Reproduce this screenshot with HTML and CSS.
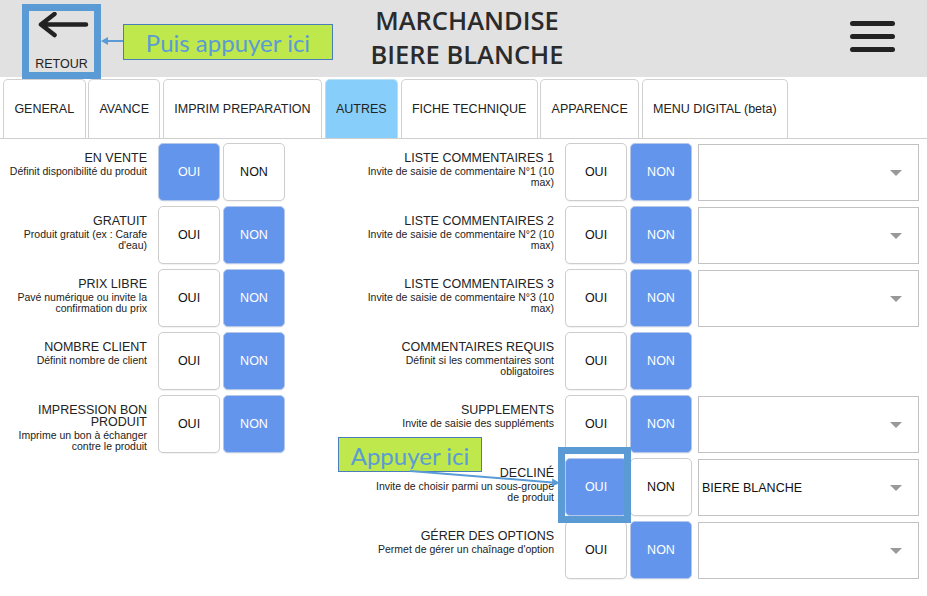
FILE: index.html
```html
<!DOCTYPE html>
<html lang="fr">
<head>
<meta charset="utf-8">
<title>Marchandise - Biere Blanche</title>
<link rel="stylesheet" href="styles.css">
</head>
<body>
<div class="app">
  <header class="topbar">
    <div class="back">
      <svg class="back-icon" width="52" height="26" viewBox="0 0 52 26">
        <path d="M4 12.5H49 M17.5 2 L4 12.5 L17.5 23" fill="none" stroke="#222" stroke-width="4.5" stroke-linecap="round" stroke-linejoin="round"/>
      </svg>
      <span class="back-label">RETOUR</span>
    </div>
    <h1 class="title">MARCHANDISE<br>BIERE BLANCHE</h1>
    <div class="burger"><span></span><span></span><span></span></div>
  </header>

  <nav class="tabs">
    <div class="tab">GENERAL</div>
    <div class="tab">AVANCE</div>
    <div class="tab">IMPRIM PREPARATION</div>
    <div class="tab tab-active">AUTRES</div>
    <div class="tab">FICHE TECHNIQUE</div>
    <div class="tab">APPARENCE</div>
    <div class="tab">MENU DIGITAL (beta)</div>
  </nav>

  <main class="content">
    <section class="group group-left">
      <div class="label"><div class="l-title">EN VENTE</div><div class="l-sub">Définit disponibilité du produit</div></div>
      <div class="btn on">OUI</div><div class="btn">NON</div>

      <div class="label"><div class="l-title">GRATUIT</div><div class="l-sub">Produit gratuit (ex : Carafe d'eau)</div></div>
      <div class="btn">OUI</div><div class="btn on">NON</div>

      <div class="label"><div class="l-title">PRIX LIBRE</div><div class="l-sub">Pavé numérique ou invite la confirmation du prix</div></div>
      <div class="btn">OUI</div><div class="btn on">NON</div>

      <div class="label"><div class="l-title">NOMBRE CLIENT</div><div class="l-sub">Définit nombre de client</div></div>
      <div class="btn">OUI</div><div class="btn on">NON</div>

      <div class="label"><div class="l-title">IMPRESSION BON PRODUIT</div><div class="l-sub">Imprime un bon à échanger contre le produit</div></div>
      <div class="btn">OUI</div><div class="btn on">NON</div>
    </section>

    <section class="group group-right">
      <div class="label"><div class="l-title">LISTE COMMENTAIRES 1</div><div class="l-sub">Invite de saisie de commentaire N°1 (10 max)</div></div>
      <div class="btn">OUI</div><div class="btn on">NON</div>
      <div class="select"><span class="sel-text"></span><span class="caret"></span></div>

      <div class="label"><div class="l-title">LISTE COMMENTAIRES 2</div><div class="l-sub">Invite de saisie de commentaire N°2 (10 max)</div></div>
      <div class="btn">OUI</div><div class="btn on">NON</div>
      <div class="select"><span class="sel-text"></span><span class="caret"></span></div>

      <div class="label"><div class="l-title">LISTE COMMENTAIRES 3</div><div class="l-sub">Invite de saisie de commentaire N°3 (10 max)</div></div>
      <div class="btn">OUI</div><div class="btn on">NON</div>
      <div class="select"><span class="sel-text"></span><span class="caret"></span></div>

      <div class="label"><div class="l-title">COMMENTAIRES REQUIS</div><div class="l-sub">Définit si les commentaires sont obligatoires</div></div>
      <div class="btn">OUI</div><div class="btn on">NON</div>
      <div class="empty"></div>

      <div class="label"><div class="l-title">SUPPLEMENTS</div><div class="l-sub">Invite de saisie des suppléments</div></div>
      <div class="btn">OUI</div><div class="btn on">NON</div>
      <div class="select"><span class="sel-text"></span><span class="caret"></span></div>

      <div class="label"><div class="l-title">DECLINÉ</div><div class="l-sub">Invite de choisir parmi un sous-groupe de produit</div></div>
      <div class="btn on">OUI</div><div class="btn">NON</div>
      <div class="select"><span class="sel-text">BIERE BLANCHE</span><span class="caret"></span></div>

      <div class="label"><div class="l-title">GÉRER DES OPTIONS</div><div class="l-sub">Permet de gérer un chaînage d'option</div></div>
      <div class="btn">OUI</div><div class="btn on">NON</div>
      <div class="select"><span class="sel-text"></span><span class="caret"></span></div>
    </section>
  </main>

  <div class="frame frame-back"></div>
  <div class="note note-top">Puis appuyer ici</div>
  <div class="frame frame-oui"></div>
  <div class="note note-oui">Appuyer ici</div>
  <svg class="arrows" width="927" height="596" viewBox="0 0 927 596">
    <line x1="123" y1="41" x2="106" y2="41" stroke="#5b9bd5" stroke-width="2"/>
    <path d="M101 41 L108 37 L108 45 Z" fill="#5b9bd5"/>
    <line x1="410" y1="471" x2="552" y2="482.4" stroke="#5b9bd5" stroke-width="2"/>
    <path d="M560 483 L551.7 486.4 L552.3 478.4 Z" fill="#5b9bd5"/>
  </svg>
</div>
</body>
</html>
```

FILE: styles.css
```css
* { box-sizing: border-box; }

html, body {
  margin: 0;
  padding: 0;
  background: #ffffff;
}

body {
  font-family: "Liberation Sans", Arial, sans-serif;
  color: #222;
}

.app {
  position: relative;
  width: 927px;
  height: 596px;
  overflow: hidden;
}

/* Header */
.topbar {
  height: 77px;
  background: #e1e1e1;
  display: grid;
  grid-template-columns: 1fr auto 1fr;
  align-items: start;
}

.back {
  justify-self: start;
  margin-left: 29px;
  margin-top: 12px;
  width: 65px;
  display: flex;
  flex-direction: column;
  align-items: center;
}

.back-icon { display: block; margin-left: 3px; }

.back-label {
  margin-top: 19px;
  font-size: 12.5px;
  line-height: 14px;
  color: #222;
}

.title {
  margin: 0;
  padding: 3px 0 0 7px;
  font-family: "Open Sans", "Noto Sans", sans-serif;
  font-weight: 600;
  font-size: 25.5px;
  line-height: 34px;
  color: #2b2b2b;
  text-align: center;
}

.burger {
  justify-self: end;
  margin-right: 32px;
  margin-top: 21px;
  width: 45px;
  display: flex;
  flex-direction: column;
  gap: 8px;
}

.burger span {
  display: block;
  height: 5px;
  border-radius: 3px;
  background: #222;
}

/* Tabs */
.tabs {
  margin-top: 2px;
  height: 60px;
  display: flex;
  align-items: flex-end;
  gap: 2.5px;
  padding-left: 3px;
  border-bottom: 1px solid #cfcfcf;
}

.tab {
  height: 59px;
  padding: 0 10.4px;
  display: flex;
  align-items: center;
  font-size: 12.5px;
  color: #222;
  background: #fff;
  border: 1px solid #d2d2d2;
  border-bottom: none;
  border-radius: 5px 5px 0 0;
}

.tab-active {
  background: #87cefa;
  border-color: #b9dff7;
}

/* Content */
.content {
  display: flex;
  gap: 81px;
  padding-top: 4px;
}

.group {
  display: grid;
  grid-auto-rows: 58px;
  row-gap: 5px;
  column-gap: 3px;
}

.group-left {
  padding-left: 9px;
  grid-template-columns: 146px 62px 62px;
}

.group-right {
  grid-template-columns: 196px 62px 62px 224px;
}

.label {
  padding: 9px 8px 0 0;
  text-align: right;
  color: #222;
}

.l-title {
  font-size: 12.5px;
  line-height: 12px;
}

.l-sub {
  margin-top: 2px;
  font-size: 10.5px;
  line-height: 11px;
  color: #222;
}

.btn {
  display: flex;
  align-items: center;
  justify-content: center;
  font-size: 12.5px;
  color: #111;
  background: #fff;
  border: 1px solid #cdcdcd;
  border-radius: 5px;
  box-shadow: 0 1px 1px rgba(0, 0, 0, 0.06);
}

.btn.on {
  background: #6495ed;
  border-color: #b5c8ea;
  color: #fff;
}

.select {
  margin: 1px 0 0 3px;
  height: 57px;
  display: flex;
  align-items: center;
  justify-content: space-between;
  padding: 0 16px 0 3px;
  background: #fff;
  border: 1px solid #c2c2c2;
}

.sel-text {
  font-size: 12.5px;
  color: #111;
}

.caret {
  width: 0;
  height: 0;
  border-left: 6.5px solid transparent;
  border-right: 6.5px solid transparent;
  border-top: 6px solid #999;
}

/* Annotations (overlays) */
.frame {
  position: absolute;
  border: 7px solid #5b9bd5;
}

.frame-back { left: 22px; top: 4px; width: 79px; height: 75px; }
.frame-oui { left: 558px; top: 447px; width: 73px; height: 76px; }

.note {
  position: absolute;
  display: flex;
  align-items: center;
  justify-content: center;
  padding-top: 1px;
  background: #bfe84c;
  border: 1px solid #4a7ebb;
  color: #5b9bd5;
  font-family: Lato, "Open Sans", sans-serif;
  font-size: 24px;
}

.note-top { left: 123px; top: 24px; width: 210px; height: 36px; }
.note-oui { left: 338px; top: 437px; width: 144px; height: 35px; }

.arrows {
  position: absolute;
  left: 0;
  top: 0;
  pointer-events: none;
}
```
